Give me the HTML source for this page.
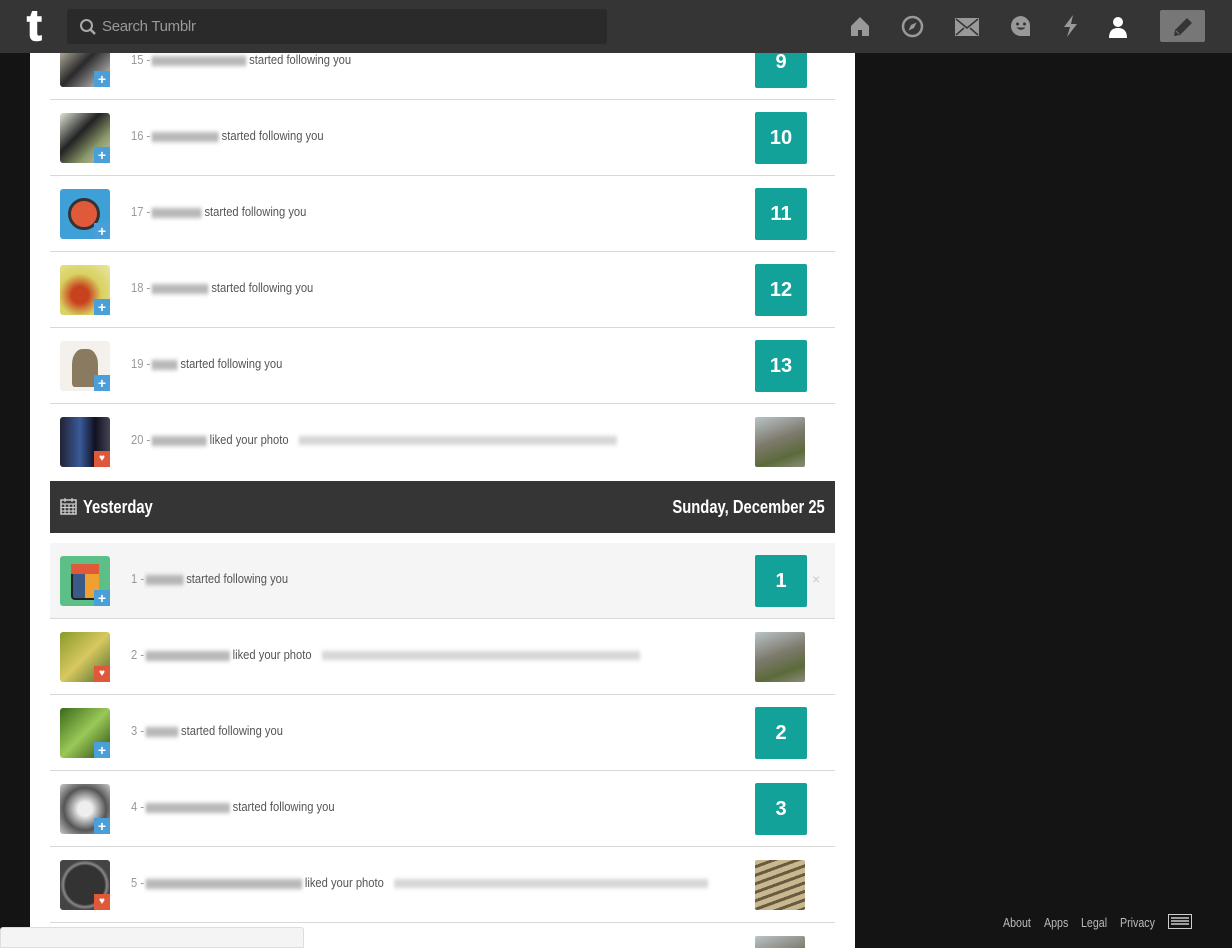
<!DOCTYPE html>
<html><head><meta charset="utf-8"><style>
*{margin:0;padding:0;box-sizing:border-box}
html,body{width:1232px;height:948px;overflow:hidden}
body{background:#141414;font-family:"Liberation Sans",sans-serif;position:relative}
.hdr{position:absolute;left:0;top:0;width:1232px;height:53px;background:#353535;z-index:5}
.logo{position:absolute;left:27px;top:4px;color:#fff;font-family:"Liberation Sans",sans-serif;font-weight:bold;font-size:44px;line-height:44px;-webkit-text-stroke:1.5px #fff}
.search{position:absolute;left:67px;top:9px;width:540px;height:35px;background:#2a2a2a;border-radius:3px;color:#999;font-size:15px;line-height:35px;padding-left:35px;letter-spacing:-0.3px}
.search svg{position:absolute;left:12px;top:9px}
.ic{position:absolute;top:15px}
.pen{position:absolute;left:1160px;top:10px;width:45px;height:32px;background:#777;border-radius:2px}
.panel{position:absolute;left:30px;top:0;width:825px;height:948px;background:#fff}
.row{position:absolute;left:50px;width:785px;height:76px;border-bottom:1px solid #d8d8d8;overflow:hidden}
.av{position:absolute;left:10px;top:13px;width:50px;height:50px;border-radius:3px;overflow:hidden}
.bd{position:absolute;left:44px;top:47px;width:16px;height:16px;background:#4a9fd8;color:#fff;font:bold 14px/16px "Liberation Sans",sans-serif;text-align:center}
.bd.h{background:#e0583a;font-size:10px}
.tx{position:absolute;left:81px;top:28px;font-size:13px;color:#555;white-space:nowrap;transform:scaleX(0.86);transform-origin:left}
.tx .n{color:#999}
.bl{display:inline-block;height:10px;background:#999;filter:blur(2px);vertical-align:middle;margin:0 3px 0 2px;opacity:.7}
.q{display:inline-block;height:9px;background:#bbb;filter:blur(2px);vertical-align:middle;margin-left:8px;opacity:.6}
.num{position:absolute;left:705px;top:12px;width:52px;height:52px;background:#12a299;border-radius:2px;color:#fff;font:bold 20px/52px "Liberation Sans",sans-serif;text-align:center}
.th{position:absolute;left:705px;top:13px;width:50px;height:50px;border-radius:2px;background:linear-gradient(160deg,#b9c4c8 0%,#7d7a6c 45%,#5b6a3a 75%,#8a8d7a 100%)}
.day{position:absolute;left:50px;top:481px;width:785px;height:52px;background:#353535;color:#fff;font-weight:bold;font-size:18px;line-height:52px;padding:0 10px}
.day .s{display:inline-block;transform:scaleX(0.82);transform-origin:left}
.day .r{position:absolute;right:10px;top:0;transform:scaleX(0.82);transform-origin:right}
.foot{position:absolute;top:915px;color:#bbb;font-size:13px;transform:scaleX(0.82);transform-origin:left}
</style></head><body>
<div class="hdr">
<div class="logo">t</div>
<div class="search"><svg width="18" height="18" viewBox="0 0 18 18"><circle cx="7.5" cy="7.5" r="5.5" fill="none" stroke="#aaa" stroke-width="2"/><path d="M11.5 11.5L16 16" stroke="#aaa" stroke-width="2.5"/></svg>Search Tumblr</div>
<svg class="ic" style="left:849px" width="22" height="22" viewBox="0 0 22 22"><path d="M11 2L2 11v10h7v-6h4v6h7V11z" fill="#999"/></svg>
<svg class="ic" style="left:901px" width="23" height="23" viewBox="0 0 23 23"><circle cx="11.5" cy="11.5" r="9.5" fill="none" stroke="#999" stroke-width="2.5"/><path d="M15.5 7.5l-2.5 5.5-5.5 2.5 2.5-5.5z" fill="#999"/></svg>
<svg class="ic" style="left:955px;top:18px" width="24" height="18" viewBox="0 0 24 18"><rect x="0" y="0" width="24" height="18" fill="#999"/><path d="M1 1l11 9 11-9M1 17l8-7M23 17l-8-7" stroke="#353535" stroke-width="1.5" fill="none"/></svg>
<svg class="ic" style="left:1010px" width="22" height="22" viewBox="0 0 22 22"><path d="M11 1a10 10 0 1 0 0 20h9v-9A10 10 0 0 0 11 1z" fill="#999"/><circle cx="7.5" cy="9" r="1.5" fill="#353535"/><circle cx="14.5" cy="9" r="1.5" fill="#353535"/><path d="M6.5 12.5q4.5 4.5 9 0z" fill="#353535"/></svg>
<svg class="ic" style="left:1063px" width="16" height="22" viewBox="0 0 16 22"><path d="M10 0L1 12h6l-3 10 10-13H8z" fill="#999"/></svg>
<svg class="ic" style="left:1108px;top:16px" width="20" height="22" viewBox="0 0 20 22"><circle cx="10" cy="6" r="5" fill="#fff"/><path d="M1 22q0-10 9-10t9 10z" fill="#fff"/></svg>
<div class="pen"><svg style="position:absolute;left:12px;top:6px" width="22" height="22" viewBox="0 0 22 22"><path d="M15 2l5 5L8 19l-6 1 1-6z" fill="#353535"/><path d="M4 15l3 3" stroke="#777" stroke-width="1"/></svg></div>
</div>
<div class="panel"></div>

<div class="row" style="top:24px"><div class="av" style="background:linear-gradient(135deg,#e9e0c8,#2a2a2a 50%,#ddd)"></div><div class="bd">+</div><div class="tx"><span class="n">15 -</span><span class="bl" style="width:110px"></span>started following you</div><div class="num">9</div></div>
<div class="row" style="top:100px"><div class="av" style="background:linear-gradient(135deg,#dfe6d8,#222 40%,#8b9a6a 70%,#ccc)"></div><div class="bd">+</div><div class="tx"><span class="n">16 -</span><span class="bl" style="width:78px"></span>started following you</div><div class="num">10</div></div>
<div class="row" style="top:176px"><div class="av" style="background:#3fa0d8"><div style="position:absolute;left:8px;top:9px;width:32px;height:32px;border-radius:50%;background:#e05a3a;border:3px solid #333"></div></div><div class="bd">+</div><div class="tx"><span class="n">17 -</span><span class="bl" style="width:58px"></span>started following you</div><div class="num">11</div></div>
<div class="row" style="top:252px"><div class="av" style="background:radial-gradient(circle at 40% 60%,#c8421e 20%,#d8d060 50%,#e8e8a0)"></div><div class="bd">+</div><div class="tx"><span class="n">18 -</span><span class="bl" style="width:66px"></span>started following you</div><div class="num">12</div></div>
<div class="row" style="top:328px"><div class="av" style="background:#f4f1ec"><div style="position:absolute;left:12px;top:8px;width:26px;height:38px;background:#8a7a60;border-radius:40% 40% 10% 10%"></div></div><div class="bd">+</div><div class="tx"><span class="n">19 -</span><span class="bl" style="width:30px"></span>started following you</div><div class="num">13</div></div>
<div class="row" style="top:404px;border-bottom:none"><div class="av" style="background:linear-gradient(90deg,#223,#3a5a9a 40%,#112 70%,#445)"></div><div class="bd h">♥</div><div class="tx"><span class="n">20 -</span><span class="bl" style="width:64px"></span>liked your photo <span class="q" style="width:370px"></span></div><div class="th"></div></div>

<div class="day"><svg style="vertical-align:-2px;margin-right:6px" width="17" height="17" viewBox="0 0 17 17"><rect x="1" y="2" width="15" height="14" fill="none" stroke="#ccc" stroke-width="1.5"/><path d="M1 6h15M5 6v10M9 6v10M13 6v10M1 9.5h15M1 13h15M5 0v4M12 0v4" stroke="#ccc" stroke-width="1.2"/></svg><span class="s">Yesterday</span><span class="r">Sunday, December 25</span></div>

<div class="row" style="top:543px;background:#f5f5f5"><div class="av" style="background:#5cbf87"><div style="position:absolute;left:11px;top:8px;width:28px;height:36px;background:#3a5a8a;border:2px solid #222;border-radius:4px"></div><div style="position:absolute;left:25px;top:16px;width:14px;height:26px;background:#f0a030"></div><div style="position:absolute;left:11px;top:8px;width:28px;height:10px;background:#e05a3a"></div></div><div class="bd">+</div><div class="tx"><span class="n">1 -</span><span class="bl" style="width:44px"></span>started following you</div><div class="num">1</div><div style="position:absolute;left:762px;top:28px;color:#ccc;font-size:14px">×</div></div>
<div class="row" style="top:619px"><div class="av" style="background:linear-gradient(135deg,#8a9a2a,#d8c860 50%,#4a6a2a)"></div><div class="bd h">♥</div><div class="tx"><span class="n">2 -</span><span class="bl" style="width:98px"></span>liked your photo <span class="q" style="width:370px"></span></div><div class="th"></div></div>
<div class="row" style="top:695px"><div class="av" style="background:linear-gradient(135deg,#3a6a1a,#9ac858 50%,#2a4a10)"></div><div class="bd">+</div><div class="tx"><span class="n">3 -</span><span class="bl" style="width:38px"></span>started following you</div><div class="num">2</div></div>
<div class="row" style="top:771px"><div class="av" style="background:radial-gradient(circle,#eee 20%,#555 60%,#ccc)"></div><div class="bd">+</div><div class="tx"><span class="n">4 -</span><span class="bl" style="width:98px"></span>started following you</div><div class="num">3</div></div>
<div class="row" style="top:847px"><div class="av" style="background:radial-gradient(circle,#333 55%,#888 62%,#444 70%)"></div><div class="bd h">♥</div><div class="tx"><span class="n">5 -</span><span class="bl" style="width:182px"></span>liked your photo <span class="q" style="width:365px"></span></div><div class="th" style="background:repeating-linear-gradient(160deg,#c8b890 0 5px,#6a5a40 5px 8px)"></div></div>
<div class="row" style="top:923px;height:25px;border-bottom:none"><div class="th"></div></div>

<div style="position:absolute;left:0;top:927px;width:304px;height:21px;background:#f4f4f4;border-radius:3px 3px 0 0;border:1px solid #ddd"></div>

<div class="foot" style="left:1003px">About</div>
<div class="foot" style="left:1044px">Apps</div>
<div class="foot" style="left:1081px">Legal</div>
<div class="foot" style="left:1120px">Privacy</div>
<svg style="position:absolute;left:1168px;top:914px" width="24" height="15" viewBox="0 0 24 15"><rect x="0.5" y="0.5" width="23" height="14" fill="none" stroke="#ccc"/><path d="M3 4h18M3 7h18M3 10h18" stroke="#ccc" stroke-width="1.5"/></svg>
</body></html>
